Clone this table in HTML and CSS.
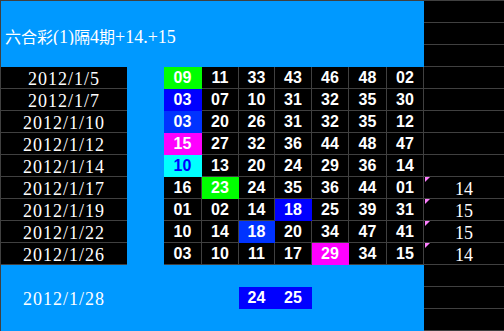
FILE: index.html
```html
<!DOCTYPE html>
<html>
<head>
<meta charset="utf-8">
<link rel="stylesheet" href="styles.css">
</head>
<body>
<div class="sheet">
  <div class="blue span9"></div><div class="right"></div>
  <div class="blue span9 title"><span class="cjk">六合彩</span>(1)<span class="cjk">隔</span>4<span class="cjk">期</span>+14.+15</div><div class="right"></div>
  <div class="blue span9"></div><div class="right"></div>

  <div class="date">2012/1/5</div><div class="blue"></div>
  <div class="num green">09</div><div class="num">11</div><div class="num">33</div><div class="num">43</div><div class="num">46</div><div class="num">48</div><div class="num">02</div><div class="right"></div>

  <div class="date">2012/1/7</div><div class="blue"></div>
  <div class="num royal">03</div><div class="num">07</div><div class="num">10</div><div class="num">31</div><div class="num">32</div><div class="num">35</div><div class="num">30</div><div class="right"></div>

  <div class="date">2012/1/10</div><div class="blue"></div>
  <div class="num azure">03</div><div class="num">20</div><div class="num">26</div><div class="num">31</div><div class="num">32</div><div class="num">35</div><div class="num">12</div><div class="right"></div>

  <div class="date">2012/1/12</div><div class="blue"></div>
  <div class="num pink">15</div><div class="num">27</div><div class="num">32</div><div class="num">36</div><div class="num">44</div><div class="num">48</div><div class="num">47</div><div class="right"></div>

  <div class="date">2012/1/14</div><div class="blue"></div>
  <div class="num cyan">10</div><div class="num">13</div><div class="num">20</div><div class="num">24</div><div class="num">29</div><div class="num">36</div><div class="num">14</div><div class="right"></div>

  <div class="date">2012/1/17</div><div class="blue"></div>
  <div class="num">16</div><div class="num green">23</div><div class="num">24</div><div class="num">35</div><div class="num">36</div><div class="num">44</div><div class="num">01</div><div class="right flag">14</div>

  <div class="date">2012/1/19</div><div class="blue"></div>
  <div class="num">01</div><div class="num">02</div><div class="num">14</div><div class="num royal">18</div><div class="num">25</div><div class="num">39</div><div class="num">31</div><div class="right flag">15</div>

  <div class="date">2012/1/22</div><div class="blue"></div>
  <div class="num">10</div><div class="num">14</div><div class="num azure">18</div><div class="num">20</div><div class="num">34</div><div class="num">47</div><div class="num">41</div><div class="right flag">15</div>

  <div class="date">2012/1/26</div><div class="blue"></div>
  <div class="num">03</div><div class="num">10</div><div class="num">11</div><div class="num">17</div><div class="num pink">29</div><div class="num">34</div><div class="num">15</div><div class="right flag">14</div>

  <div class="blue span9"></div><div class="right"></div>

  <div class="blue date-plain">2012/1/28</div><div class="blue span3"></div>
  <div class="num royal">24</div><div class="num royal">25</div><div class="blue span3"></div><div class="right"></div>

  <div class="blue span9"></div><div class="right"></div>
</div>
</body>
</html>
```
FILE: styles.css
```css
html, body {
  margin: 0;
  padding: 0;
  background: #000;
}
.sheet {
  display: grid;
  grid-template-columns: 126px 37px 38px 37px 36px 37px 37px 38px 37px 80px;
  grid-auto-rows: 22px;
  width: 503px;
  border-top: 1px solid #404040;
  border-left: 1px solid #404040;
}
.sheet > div {
  box-sizing: border-box;
  overflow: visible;
  white-space: nowrap;
}
.blue {
  background: #0099ff;
}
.span9 { grid-column: span 9; }
.span3 { grid-column: span 3; }
.title {
  color: #fff;
  font-family: "Liberation Serif", "Noto Sans CJK TC", serif;
  font-size: 18px;
  line-height: 22px;
  padding-left: 4px;
  padding-top: 2px;
}
.cjk {
  font-family: "Noto Sans CJK TC", sans-serif;
  font-size: 16px;
}
.date, .date-plain {
  color: #fff;
  font-family: "Liberation Serif", serif;
  font-size: 18px;
  letter-spacing: 1px;
  text-align: center;
  line-height: 22px;
  padding-top: 1px;
}
.date {
  background: #000;
  border-bottom: 1px solid #404040;
}
.num {
  background: #000;
  color: #fff;
  font-family: "Liberation Sans", Arial, sans-serif;
  font-weight: bold;
  font-size: 16px;
  text-align: center;
  line-height: 21px;
  border-right: 1px solid #404040;
  border-bottom: 1px solid #404040;
}
.green { background: #00ff00; border-color: #00ff00; }
.royal { background: #0000ff; border-color: #0000ff; }
.azure { background: #0033ff; border-color: #0033ff; }
.pink { background: #ff00ff; border-color: #ff00ff; }
.cyan { background: #00ffff; border-color: #00ffff; color: #0000ff; }
.right {
  position: relative;
  background: #000;
  border-bottom: 1px solid #404040;
  color: #fff;
  font-family: "Liberation Serif", serif;
  font-size: 18px;
  text-align: center;
  line-height: 22px;
  padding-top: 1px;
}
.flag::before {
  content: "";
  position: absolute;
  left: 1px;
  top: 0;
  width: 0;
  height: 0;
  border-top: 5px solid #ff80ff;
  border-right: 5px solid transparent;
}
```
